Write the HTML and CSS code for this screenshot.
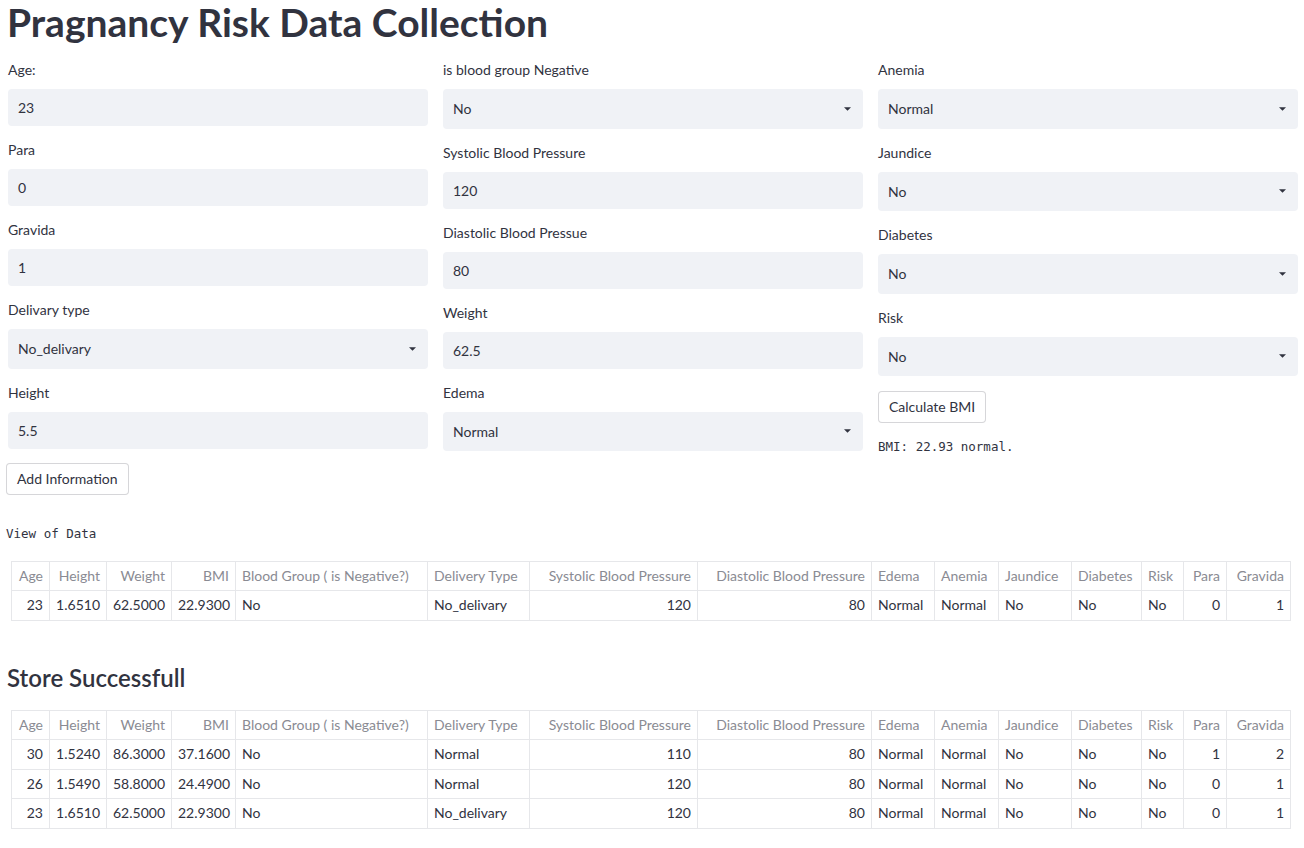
FILE: index.html
```html
<!DOCTYPE html>
<html lang="en">
<head>
<meta charset="utf-8">
<title>Pragnancy Risk Data Collection</title>
<link rel="stylesheet" href="styles.css">
</head>
<body>
<main class="page">
  <h1 class="title">Pragnancy Risk Data Collection</h1>

  <div class="columns">
    <div class="col">
      <div class="item"><div class="label">Age:</div><div class="input">23</div></div>
      <div class="item"><div class="label">Para</div><div class="input">0</div></div>
      <div class="item"><div class="label">Gravida</div><div class="input">1</div></div>
      <div class="item"><div class="label">Delivary type</div><div class="select"><span>No_delivary</span><svg class="caret" viewBox="0 0 8 4" width="7" height="4"><path d="M0 0h8L4 4z"/></svg></div></div>
      <div class="item"><div class="label">Height</div><div class="input">5.5</div></div>
      <div class="item"><button class="btn btn-left">Add Information</button></div>
    </div>
    <div class="col">
      <div class="item"><div class="label">is blood group Negative</div><div class="select"><span>No</span><svg class="caret" viewBox="0 0 8 4" width="7" height="4"><path d="M0 0h8L4 4z"/></svg></div></div>
      <div class="item"><div class="label">Systolic Blood Pressure</div><div class="input">120</div></div>
      <div class="item"><div class="label">Diastolic Blood Pressue</div><div class="input">80</div></div>
      <div class="item"><div class="label">Weight</div><div class="input">62.5</div></div>
      <div class="item"><div class="label">Edema</div><div class="select"><span>Normal</span><svg class="caret" viewBox="0 0 8 4" width="7" height="4"><path d="M0 0h8L4 4z"/></svg></div></div>
    </div>
    <div class="col">
      <div class="item"><div class="label">Anemia</div><div class="select"><span>Normal</span><svg class="caret" viewBox="0 0 8 4" width="7" height="4"><path d="M0 0h8L4 4z"/></svg></div></div>
      <div class="item"><div class="label">Jaundice</div><div class="select"><span>No</span><svg class="caret" viewBox="0 0 8 4" width="7" height="4"><path d="M0 0h8L4 4z"/></svg></div></div>
      <div class="item"><div class="label">Diabetes</div><div class="select"><span>No</span><svg class="caret" viewBox="0 0 8 4" width="7" height="4"><path d="M0 0h8L4 4z"/></svg></div></div>
      <div class="item"><div class="label">Risk</div><div class="select"><span>No</span><svg class="caret" viewBox="0 0 8 4" width="7" height="4"><path d="M0 0h8L4 4z"/></svg></div></div>
      <div class="item"><button class="btn">Calculate BMI</button></div>
      <div class="item"><pre class="mono">BMI: 22.93 normal.</pre></div>
    </div>
  </div>

  <pre class="mono view">View of Data</pre>

  <table class="data first">
    <colgroup>
      <col class="w-age"><col class="w-height"><col class="w-weight"><col class="w-bmi"><col class="w-blood"><col class="w-deliv"><col class="w-sys"><col class="w-dia"><col class="w-edema"><col class="w-anemia"><col class="w-jaun"><col class="w-diab"><col class="w-risk"><col class="w-para"><col class="w-grav">
    </colgroup>
    <thead>
      <tr><th class="num">Age</th><th class="num">Height</th><th class="num">Weight</th><th class="num">BMI</th><th>Blood Group ( is Negative?)</th><th>Delivery Type</th><th class="num">Systolic Blood Pressure</th><th class="num">Diastolic Blood Pressure</th><th>Edema</th><th>Anemia</th><th>Jaundice</th><th>Diabetes</th><th>Risk</th><th class="num">Para</th><th class="num">Gravida</th></tr>
    </thead>
    <tbody>
      <tr><td class="num">23</td><td class="num">1.6510</td><td class="num">62.5000</td><td class="num">22.9300</td><td>No</td><td>No_delivary</td><td class="num">120</td><td class="num">80</td><td>Normal</td><td>Normal</td><td>No</td><td>No</td><td>No</td><td class="num">0</td><td class="num">1</td></tr>
    </tbody>
  </table>

  <h3 class="subtitle">Store Successfull</h3>

  <table class="data second">
    <colgroup>
      <col class="w-age"><col class="w-height"><col class="w-weight"><col class="w-bmi"><col class="w-blood"><col class="w-deliv"><col class="w-sys"><col class="w-dia"><col class="w-edema"><col class="w-anemia"><col class="w-jaun"><col class="w-diab"><col class="w-risk"><col class="w-para"><col class="w-grav">
    </colgroup>
    <thead>
      <tr><th class="num">Age</th><th class="num">Height</th><th class="num">Weight</th><th class="num">BMI</th><th>Blood Group ( is Negative?)</th><th>Delivery Type</th><th class="num">Systolic Blood Pressure</th><th class="num">Diastolic Blood Pressure</th><th>Edema</th><th>Anemia</th><th>Jaundice</th><th>Diabetes</th><th>Risk</th><th class="num">Para</th><th class="num">Gravida</th></tr>
    </thead>
    <tbody>
      <tr><td class="num">30</td><td class="num">1.5240</td><td class="num">86.3000</td><td class="num">37.1600</td><td>No</td><td>Normal</td><td class="num">110</td><td class="num">80</td><td>Normal</td><td>Normal</td><td>No</td><td>No</td><td>No</td><td class="num">1</td><td class="num">2</td></tr>
      <tr><td class="num">26</td><td class="num">1.5490</td><td class="num">58.8000</td><td class="num">24.4900</td><td>No</td><td>Normal</td><td class="num">120</td><td class="num">80</td><td>Normal</td><td>Normal</td><td>No</td><td>No</td><td>No</td><td class="num">0</td><td class="num">1</td></tr>
      <tr><td class="num">23</td><td class="num">1.6510</td><td class="num">62.5000</td><td class="num">22.9300</td><td>No</td><td>No_delivary</td><td class="num">120</td><td class="num">80</td><td>Normal</td><td>Normal</td><td>No</td><td>No</td><td>No</td><td class="num">0</td><td class="num">1</td></tr>
    </tbody>
  </table>
</main>
</body>
</html>
```

FILE: styles.css
```css
* { box-sizing: border-box; }

html, body {
  margin: 0;
  padding: 0;
  background: #ffffff;
}

body {
  font-family: "Lato", "Open Sans", "Liberation Sans", sans-serif;
  color: #31333f;
  font-size: 14px;
}

.page {
  width: 1304px;
  padding: 0 6px;
}

.title {
  margin: 0 0 17px 0;
  font-size: 39px;
  line-height: 44px;
  font-weight: 700;
  color: #31333f;
  padding-left: 1px;
  white-space: nowrap;
}

.columns {
  display: grid;
  grid-template-columns: 420px 420px 420px;
  column-gap: 15px;
  align-items: start;
  margin-left: 2px;
}

.col {
  display: flex;
  flex-direction: column;
  gap: 15px;
}

.label {
  font-size: 14px;
  line-height: 18px;
  height: 18px;
  margin-bottom: 10px;
  color: #31333f;
}

.input,
.select {
  background: #f0f2f6;
  border-radius: 4px;
  font-size: 14px;
  color: #31333f;
  padding: 0 10px;
  display: flex;
  align-items: center;
}

.input {
  height: 37px;
}

.select {
  height: 39.5px;
  justify-content: space-between;
  padding-right: 12px;
}

.caret {
  display: block;
  fill: #31333f;
}

.btn {
  font-family: "Lato", "Open Sans", "Liberation Sans", sans-serif;
  font-size: 14px;
  color: #31333f;
  background: #ffffff;
  border: 1px solid rgba(49, 51, 63, 0.2);
  border-radius: 4px;
  height: 32px;
  padding: 0 10px;
  line-height: 30px;
  align-self: flex-start;
  display: block;
}

.btn-left {
  margin-left: -2px;
  margin-top: -1px;
}

.mono {
  font-family: "DejaVu Sans Mono", "Liberation Mono", monospace;
  font-size: 12.5px;
  line-height: 18px;
  margin: 0;
  color: #31333f;
}

.view {
  margin-top: 30px;
}

.data {
  border-collapse: collapse;
  table-layout: fixed;
  width: 1279px;
  margin-left: 5px;
  font-size: 14px;
}

.data.first {
  margin-top: 18px;
}

.data th,
.data td {
  border: 1px solid #e6e7ea;
  padding: 4px 6px 4px 6px;
  line-height: 20.5px;
  text-align: left;
  white-space: nowrap;
  overflow: hidden;
}

.data th {
  font-weight: 400;
  color: #8a8b93;
}

.data td {
  color: #31333f;
}

.data .num {
  text-align: right;
}

.subtitle {
  margin: 41px 0 16px 0;
  font-size: 24px;
  line-height: 32px;
  font-weight: 600;
  color: #31333f;
  padding-left: 1px;
}

.w-age { width: 38px; }
.w-height { width: 57px; }
.w-weight { width: 65px; }
.w-bmi { width: 64px; }
.w-blood { width: 192px; }
.w-deliv { width: 102px; }
.w-sys { width: 168px; }
.w-dia { width: 174px; }
.w-edema { width: 63px; }
.w-anemia { width: 64px; }
.w-jaun { width: 73px; }
.w-diab { width: 70px; }
.w-risk { width: 42px; }
.w-para { width: 43px; }
.w-grav { width: 64px; }
```
